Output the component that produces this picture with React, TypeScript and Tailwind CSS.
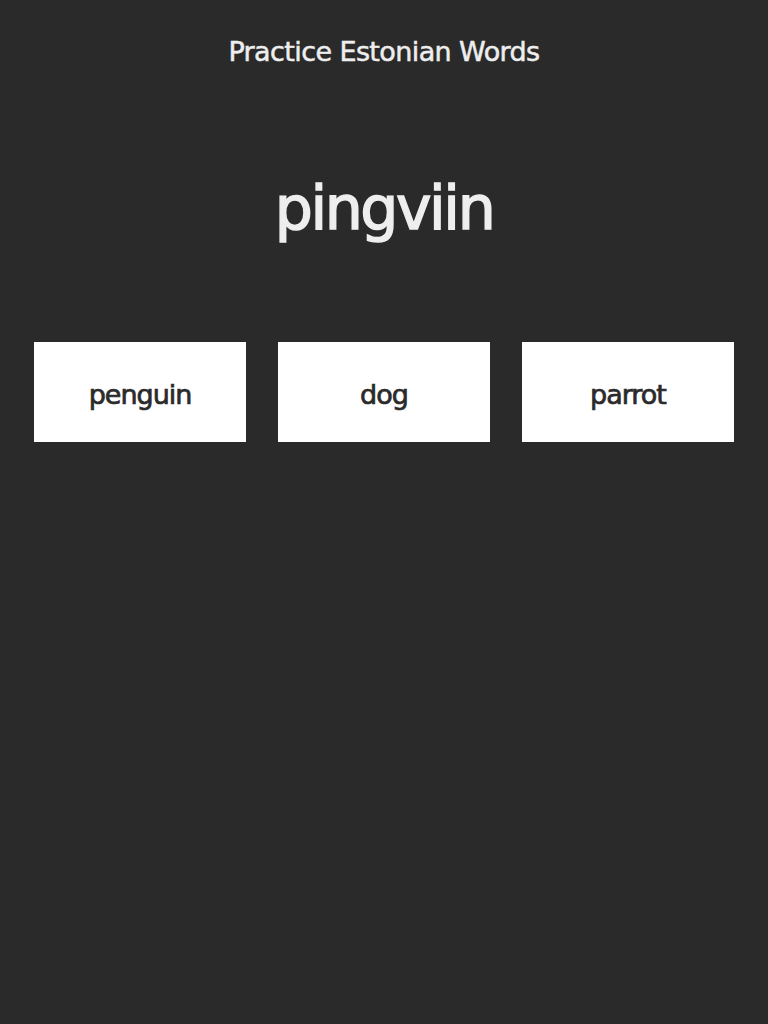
export default function App() {
  const choices = ["penguin", "dog", "parrot"];

  return (
    <div
      className="min-h-screen bg-[#2a2a2a] text-[#eeeeee] flex flex-col items-center"
      style={{ fontFamily: '"DejaVu Sans", sans-serif' }}
    >
      {/* Header */}
      <h1 className="mt-[34px] text-[27px] leading-[36px] tracking-[-0.6px] [-webkit-text-stroke:0.5px_#eeeeee]">
        Practice Estonian Words
      </h1>

      {/* Word to guess */}
      <div className="mt-[98px] text-[60px] leading-[80px] tracking-[-2.4px] [-webkit-text-stroke:1.5px_#eeeeee]">
        pingviin
      </div>

      {/* Answer options */}
      <div className="mt-[94px] w-full px-[34px] grid grid-cols-3 gap-[32px]">
        {choices.map((c) => (
          <button
            key={c}
            className="h-[100px] bg-white text-[#2a2a2a] text-[27px] flex items-center justify-center pt-[6px] tracking-[-1px] [-webkit-text-stroke:0.7px_#2a2a2a]"
          >
            {c}
          </button>
        ))}
      </div>
    </div>
  );
}
